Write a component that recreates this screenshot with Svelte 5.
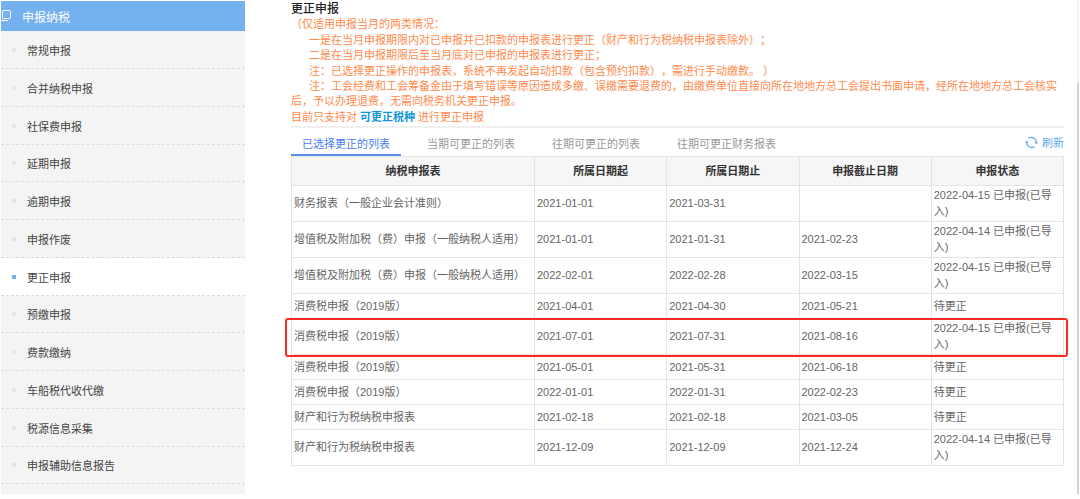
<script lang="ts">
  const menu = [
    '常规申报',
    '合并纳税申报',
    '社保费申报',
    '延期申报',
    '逾期申报',
    '申报作废',
    '更正申报',
    '预缴申报',
    '费款缴纳',
    '车船税代收代缴',
    '税源信息采集',
    '申报辅助信息报告'
  ];
  let activeMenu = $state('更正申报');

  const tabs = ['已选择更正的列表', '当期可更正的列表', '往期可更正的列表', '往期可更正财务报表'];
  let activeTab = $state(0);

  const columns = ['纳税申报表', '所属日期起', '所属日期止', '申报截止日期', '申报状态'];

  const vat = '增值税及附加税（费）申报（一般纳税人适用）';
  const consumption = '消费税申报（2019版）';
  const property = '财产和行为税纳税申报表';

  const rows = [
    { name: '财务报表（一般企业会计准则）', from: '2021-01-01', to: '2021-03-31', due: '', status: '2022-04-15 已申报(已导入)' },
    { name: vat, from: '2021-01-01', to: '2021-01-31', due: '2021-02-23', status: '2022-04-14 已申报(已导入)' },
    { name: vat, from: '2022-02-01', to: '2022-02-28', due: '2022-03-15', status: '2022-04-15 已申报(已导入)' },
    { name: consumption, from: '2021-04-01', to: '2021-04-30', due: '2021-05-21', status: '待更正' },
    { name: consumption, from: '2021-07-01', to: '2021-07-31', due: '2021-08-16', status: '2022-04-15 已申报(已导入)', marked: true },
    { name: consumption, from: '2021-05-01', to: '2021-05-31', due: '2021-06-18', status: '待更正' },
    { name: consumption, from: '2022-01-01', to: '2022-01-31', due: '2022-02-23', status: '待更正' },
    { name: property, from: '2021-02-18', to: '2021-02-18', due: '2021-03-05', status: '待更正' },
    { name: property, from: '2021-12-09', to: '2021-12-09', due: '2021-12-24', status: '2022-04-14 已申报(已导入)' }
  ];
</script>

<div class="page">
  <nav class="sidebar">
    <h2>
      <svg width="11" height="12" viewBox="0 0 11 12" fill="none" stroke="#fff">
        <rect x="1.5" y="0.5" width="8" height="8" rx="1" />
        <path d="M-0.5 2.5v7.5q0 .5 .5 .5h7" />
      </svg>
      申报纳税
    </h2>
    <ul>
      {#each menu as item}
        <li class:active={item === activeMenu}>
          <a href="#menu" onclick={() => (activeMenu = item)}>{item}</a>
        </li>
      {/each}
    </ul>
  </nav>

  <main>
    <h1>更正申报</h1>
    <div class="notes">
      <p>（仅适用申报当月的两类情况：</p>
      <p class="indent">一是在当月申报期限内对已申报并已扣款的申报表进行更正（财产和行为税纳税申报表除外）；</p>
      <p class="indent">二是在当月申报期限后至当月底对已申报的申报表进行更正；</p>
      <p class="indent">注：已选择更正操作的申报表，系统不再发起自动扣款（包含预约扣款），需进行手动缴款。 ）</p>
      <p class="indent">注：工会经费和工会筹备金由于填写错误等原因造成多缴、误缴需要退费的，由缴费单位直接向所在地地方总工会提出书面申请，经所在地地方总工会核实后，予以办理退费，无需向税务机关更正申报。</p>
      <p>目前只支持对 <a href="#types">可更正税种</a> 进行更正申报</p>
    </div>

    <div class="toolbar">
      <div class="tabs" role="tablist">
        {#each tabs as tab, i}
          <button role="tab" aria-selected={i === activeTab} class:active={i === activeTab} onclick={() => (activeTab = i)}>{tab}</button>
        {/each}
      </div>
      <button class="refresh">
        <svg width="13" height="13" viewBox="0 0 13 13">
          <g fill="none" stroke="#61aaf0" stroke-width="1.2">
            <path d="M3.2 2.6A5 5 0 0 1 11.4 6.5" />
            <path d="M9.8 10.4A5 5 0 0 1 1.6 6.5" />
          </g>
          <path d="M9.3 6.2h3.7l-1.7 2.3zM0 6.8h3.7L1.7 4.5z" fill="#61aaf0" />
        </svg>
        <span>刷新</span>
      </button>
    </div>

    <table>
      <thead>
        <tr>
          {#each columns as column}
            <th>{column}</th>
          {/each}
        </tr>
      </thead>
      <tbody>
        {#each rows as row}
          <tr class:marked={row.marked}>
            <td>{row.name}</td>
            <td>{row.from}</td>
            <td>{row.to}</td>
            <td>{row.due}</td>
            <td>{row.status}</td>
          </tr>
        {/each}
      </tbody>
    </table>
  </main>

  <div class="scroll-track"><div class="scroll-thumb"></div></div>
</div>

<style>
  :global(body) {
    background: #fff;
  }
  .page {
    display: flex;
    box-sizing: border-box;
    min-height: 100vh;
    padding: 1px 1px 5px;
    font-family: "Liberation Sans", "Noto Sans CJK SC", sans-serif;
    font-size: 11px;
    color: #666;
    text-spacing-trim: space-all;
  }
  h1, h2, p, ul {
    margin: 0;
    padding: 0;
  }
  a {
    text-decoration: none;
  }
  button {
    border: 0;
    padding: 0;
    background: none;
    font: inherit;
    cursor: pointer;
  }

  .sidebar {
    flex: 0 0 244px;
    background: #f4f4f4;
  }
  h2 {
    display: flex;
    align-items: center;
    gap: 10px;
    height: 30px;
    background: #75b0ef;
    color: #fff;
    font-size: 12px;
    font-weight: 400;
  }
  .sidebar ul {
    list-style: none;
  }
  .sidebar li {
    box-sizing: border-box;
    height: 38px;
    border-bottom: 1px dashed #dcdcdc;
  }
  .sidebar li:nth-child(4n) {
    height: 37px;
  }
  .sidebar li a {
    display: flex;
    align-items: center;
    gap: 11px;
    height: 100%;
    padding-left: 11px;
    color: #444;
  }
  .sidebar li a::before {
    content: '';
    width: 4px;
    height: 4px;
    background: #e3e5e9;
  }
  .sidebar li.active {
    background: #fff;
  }
  .sidebar li.active a::before {
    background: #75b0ef;
  }

  main {
    flex: 1;
    min-width: 0;
    padding: 0 13px 0 46px;
  }
  h1 {
    font-size: 12px;
    font-weight: 500;
    line-height: 16px;
    color: #222;
  }
  .notes {
    padding-bottom: 1px;
    border-bottom: 2px solid #f0f0f0;
    color: #ff8a4c;
  }
  .notes p {
    line-height: 15px;
  }
  .notes p:nth-child(odd) {
    margin-bottom: 1px;
  }
  .notes .indent {
    text-indent: 18px;
  }
  .notes a {
    color: #1296db;
    font-weight: bold;
  }

  .toolbar {
    display: flex;
    justify-content: space-between;
    height: 28px;
  }
  .tabs {
    display: flex;
    gap: 15px;
  }
  .tabs button {
    padding: 4px 11px 0;
    border-bottom: 2px solid transparent;
    color: #999;
  }
  .tabs button.active {
    border-color: #5b8ff0;
    color: #4a80ee;
  }
  .refresh {
    display: flex;
    align-items: center;
    gap: 4px;
    color: #61aaf0;
  }

  table {
    width: 100%;
    table-layout: fixed;
    border-collapse: collapse;
  }
  th, td {
    border: 1px solid #e4e4e4;
    line-height: 16px;
  }
  th {
    height: 28px;
    padding: 0;
    background: #f6f6f6;
    color: #333;
    font-weight: bold;
  }
  th:first-child {
    width: 242px;
  }
  td {
    box-sizing: border-box;
    height: 25px;
    padding: 1px 2px 2px;
    word-break: break-all;
  }
  .marked {
    position: relative;
  }
  .marked td:first-child::after {
    content: '';
    position: absolute;
    inset: -1px -4px -2px -7px;
    border: 2px solid #fb2a20;
    border-radius: 3px;
  }

  .scroll-track {
    width: 2px;
    background: #f0f0f0;
  }
  .scroll-thumb {
    height: 100%;
    margin-top: 82px;
    max-height: calc(100% - 82px);
    background: #d2d2d2;
  }
</style>
